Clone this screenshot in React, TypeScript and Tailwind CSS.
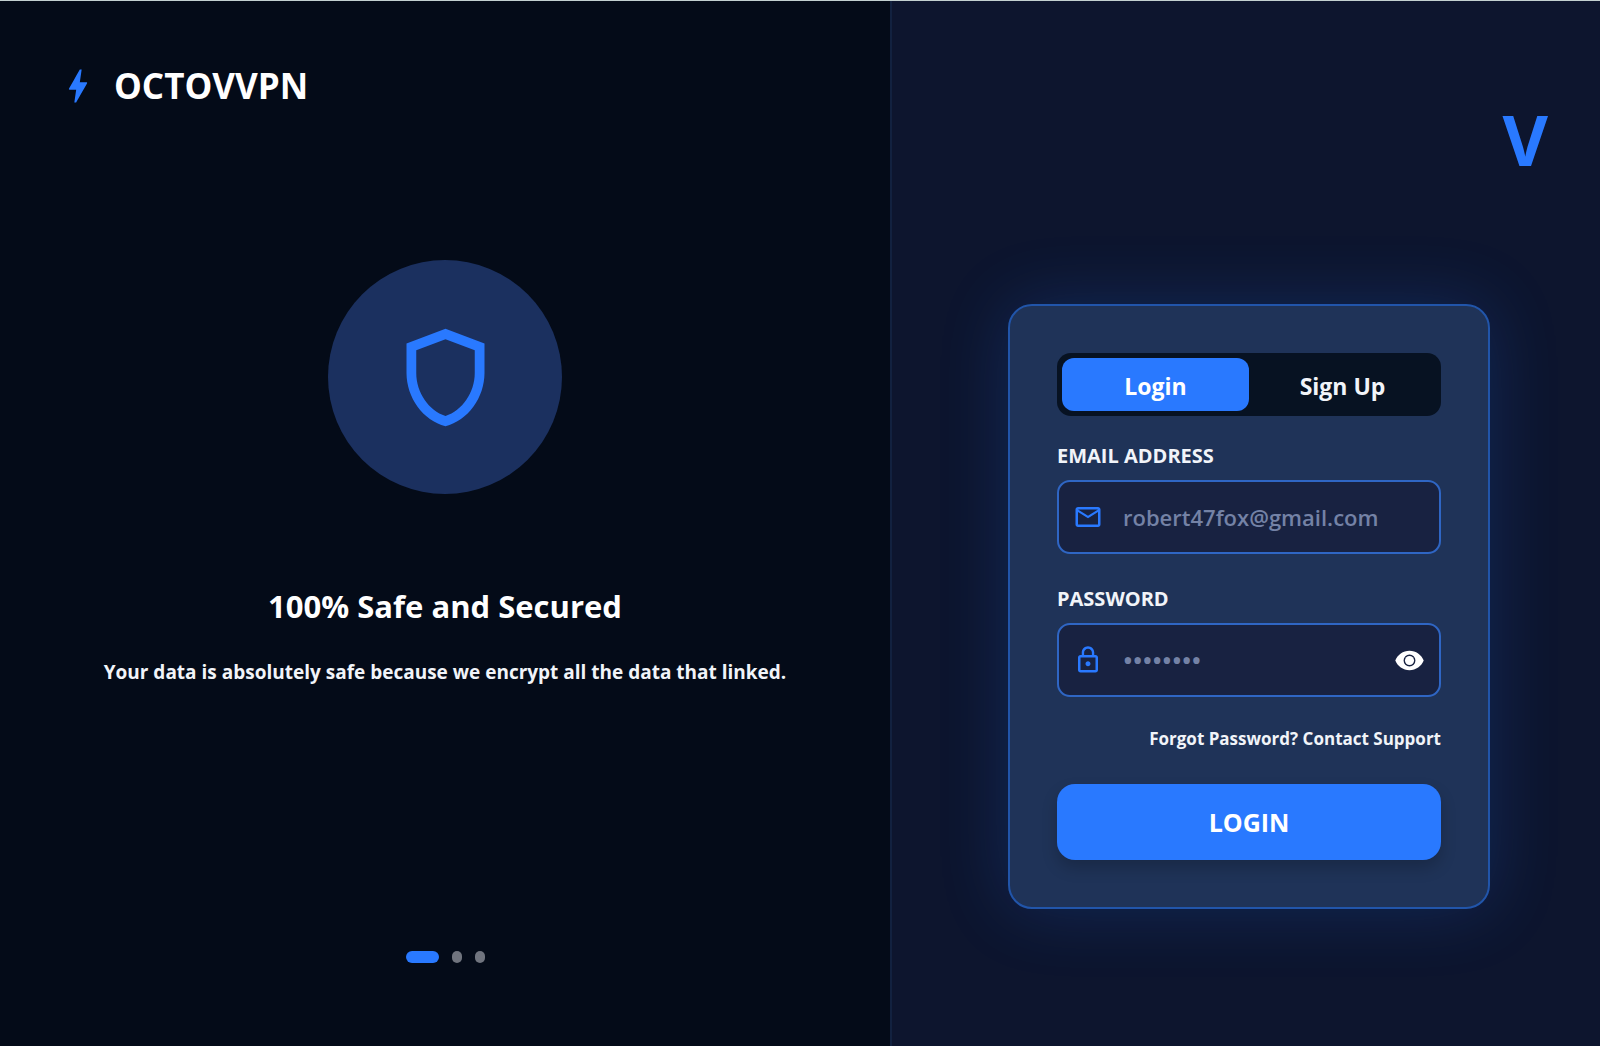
import { useState, type FormEvent, type ReactNode } from "react";
import {
  MdBolt,
  MdLockOutline,
  MdOutlineEmail,
  MdOutlineShield,
  MdVisibilityOff,
} from "react-icons/md";

type Mode = "login" | "signup";

const TABS: { id: Mode; label: string }[] = [
  { id: "login", label: "Login" },
  { id: "signup", label: "Sign Up" },
];

const SLIDES = ["Safe and secured", "Fast servers", "Every device"];

/** Solid eye with a thin iris ring. */
function EyeGlyph() {
  return (
    <svg viewBox="0 0 24 24" className="size-[31px]" fill="currentColor" aria-hidden="true">
      <path
        fillRule="evenodd"
        d="M12 4.5C7 4.5 2.73 7.61 1 12c1.73 4.39 6 7.5 11 7.5s9.27-3.11 11-7.5c-1.73-4.39-6-7.5-11-7.5zM12 7.4a4.6 4.6 0 1 1 0 9.2 4.6 4.6 0 0 1 0-9.2z"
      />
      <circle cx="12" cy="12" r="3.5" />
    </svg>
  );
}

type FieldProps = {
  id: string;
  label: string;
  type: string;
  placeholder: string;
  icon: ReactNode;
  trailing?: ReactNode;
};

function Field({ id, label, type, placeholder, icon, trailing }: FieldProps) {
  return (
    <div>
      <label htmlFor={id} className="block text-[20px] leading-6 font-bold text-[#f1f4f9]">
        {label}
      </label>
      <div className="mt-3 flex h-[74px] items-center rounded-[13px] border-2 border-[#2f66c4] bg-[#182241] px-[14px]">
        <span className="text-[#2979ff]">{icon}</span>
        <input
          id={id}
          type={type}
          placeholder={placeholder}
          className="ml-5 min-w-0 flex-1 bg-transparent text-[22px] leading-8 font-semibold text-white outline-none placeholder:text-[#7482a6] [&[id=password]]:text-[26px]"
        />
        {trailing}
      </div>
    </div>
  );
}

function IntroPanel() {
  const [slide, setSlide] = useState(0);

  return (
    <section className="flex flex-col border-r-2 border-[#12213f] bg-[#040b18] px-15 pt-15 pb-[83px]">
      <header className="flex items-center">
        <MdBolt size={44} className="-ml-1 text-[#2979ff]" aria-hidden="true" />
        <span className="ml-[14px] text-[35px] leading-[50px] font-bold text-white">OCTOVVPN</span>
      </header>

      <div className="flex flex-1 flex-col items-center pt-[149px] text-center">
        <div className="flex size-[234px] items-center justify-center rounded-full bg-[#1b305f]">
          <MdOutlineShield size={117} className="text-[#2979ff]" aria-hidden="true" />
        </div>
        <h1 className="mt-[88px] text-[31px] leading-[48px] font-bold text-white">
          100% Safe and Secured
        </h1>
        <p className="mt-7 text-[19px] leading-7 font-bold text-[#f1f4f9]">
          Your data is absolutely safe because we encrypt all the data that linked.
        </p>
      </div>

      <nav aria-label="Slides" className="flex justify-center gap-[13px]">
        {SLIDES.map((name, i) => (
          <button
            key={name}
            type="button"
            aria-label={name}
            aria-current={i === slide}
            onClick={() => setSlide(i)}
            className={
              i === slide
                ? "h-3 w-[33px] rounded-full bg-[#2979ff]"
                : "h-3 w-[10px] rounded-full bg-[#70747e]"
            }
          />
        ))}
      </nav>
    </section>
  );
}

function AuthCard() {
  const [mode, setMode] = useState<Mode>("login");
  const [visible, setVisible] = useState(false);

  const submit = (event: FormEvent) => event.preventDefault();

  return (
    <form
      onSubmit={submit}
      className="w-full max-w-[482px] rounded-[24px] border-2 border-[#2155aa] bg-[#1f3358] p-[47px] shadow-[0_0_70px_rgba(41,121,255,0.2)]"
    >
      <div role="tablist" className="flex rounded-[14px] bg-[#071222] p-[5px]">
        {TABS.map((tab) => (
          <button
            key={tab.id}
            type="button"
            role="tab"
            aria-selected={mode === tab.id}
            onClick={() => setMode(tab.id)}
            className={
              mode === tab.id
                ? "h-[53px] flex-1 rounded-[12px] bg-[#2979ff] pt-1 text-[23px] font-bold text-white"
                : "h-[53px] flex-1 rounded-[12px] pt-1 text-[23px] font-bold text-[#f1f4f9]"
            }
          >
            {tab.label}
          </button>
        ))}
      </div>

      <div className="mt-7 flex flex-col gap-[33px]">
        <Field
          id="email"
          label="EMAIL ADDRESS"
          type="email"
          placeholder="robert47fox@gmail.com"
          icon={<MdOutlineEmail size={30} />}
        />
        <Field
          id="password"
          label="PASSWORD"
          type={visible ? "text" : "password"}
          placeholder="••••••••"
          icon={<MdLockOutline size={30} />}
          trailing={
            <button
              type="button"
              aria-label={visible ? "Hide password" : "Show password"}
              onClick={() => setVisible((value) => !value)}
              className="text-white"
            >
              {visible ? <MdVisibilityOff size={31} /> : <EyeGlyph />}
            </button>
          }
        />
      </div>

      <div className="mt-7 flex justify-end">
        <a href="#support" className="text-[17px] leading-7 font-bold text-[#f1f4f9]">
          Forgot Password? Contact Support
        </a>
      </div>

      <button
        type="submit"
        className="mt-[31px] h-[76px] w-full rounded-[18px] bg-[#2979ff] pt-0.5 text-[25px] font-bold text-white shadow-[0_8px_16px_rgba(0,0,0,0.2)]"
      >
        LOGIN
      </button>
    </form>
  );
}

export default function App() {
  return (
    <main className="grid min-h-screen grid-cols-[892fr_708fr] border-t border-[#c3d0d0] bg-[#0d152e] font-['Open_Sans',sans-serif]">
      <IntroPanel />
      <section className="flex flex-col pt-[90px]">
        <div
          aria-hidden="true"
          className="pr-[52px] text-right text-[70px] leading-[96px] font-bold text-[#2979ff]"
        >
          V
        </div>
        <div className="mt-[117px] flex justify-center pl-1.5">
          <AuthCard />
        </div>
      </section>
    </main>
  );
}
